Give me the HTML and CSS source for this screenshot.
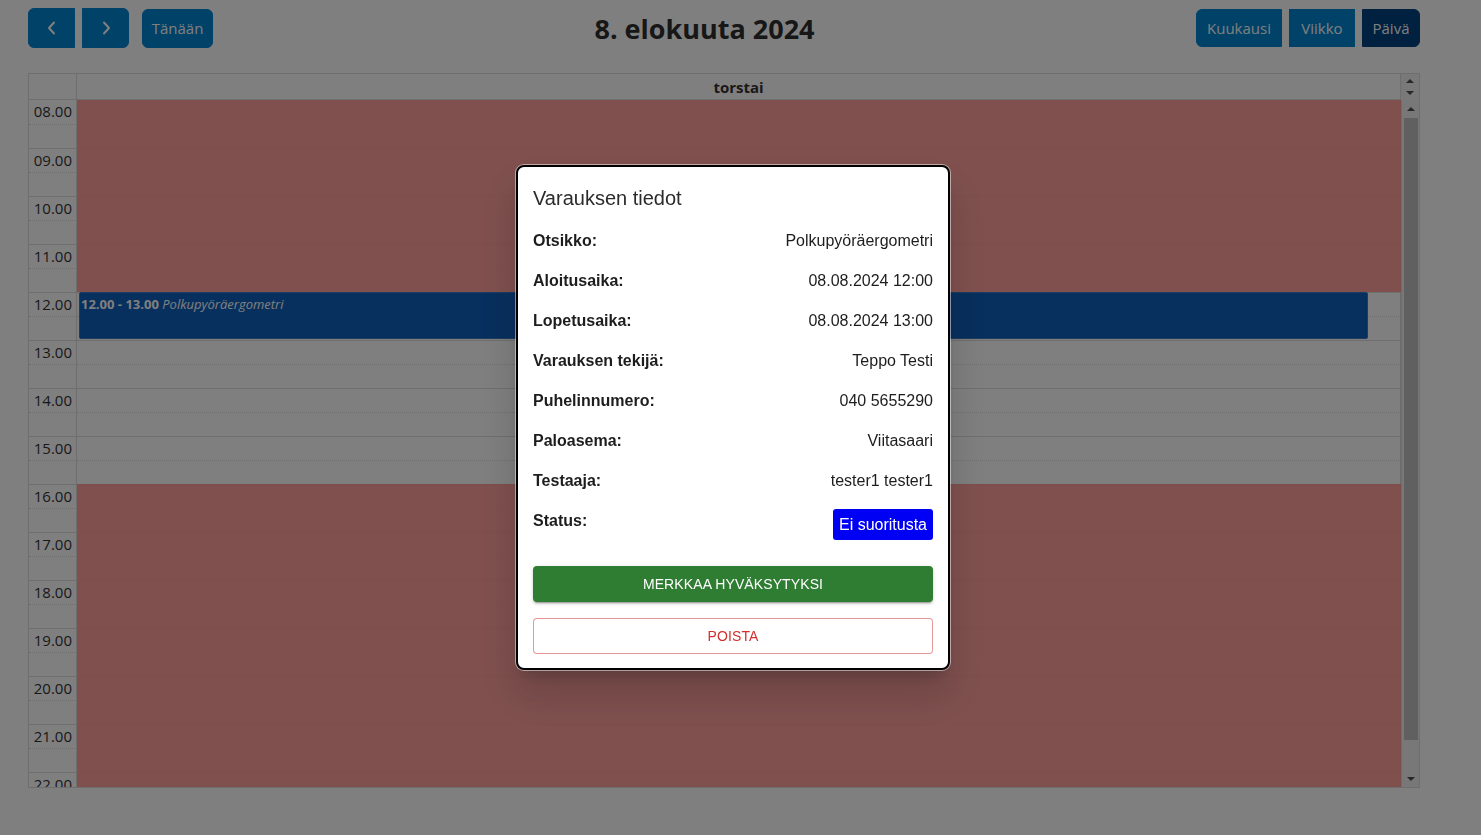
FILE: index.html
```html
<!DOCTYPE html>
<html lang="fi">
<head>
<meta charset="utf-8">
<title>Varaukset</title>
<link rel="stylesheet" href="styles.css">
</head>
<body>
<div class="page">
  <div class="toolbar">
    <div class="chunk">
      <div class="btn-group">
        <button class="btn btn-icon btn-first" aria-label="edellinen">
          <svg width="12" height="14" viewBox="0 0 12 14"><path d="M8 1.5 L3 7 L8 12.5" fill="none" stroke="#fff" stroke-width="2" stroke-linecap="round" stroke-linejoin="round"/></svg>
        </button>
        <button class="btn btn-icon btn-last" aria-label="seuraava">
          <svg width="12" height="14" viewBox="0 0 12 14"><path d="M4 1.5 L9 7 L4 12.5" fill="none" stroke="#fff" stroke-width="2" stroke-linecap="round" stroke-linejoin="round"/></svg>
        </button>
      </div>
      <button class="btn btn-today">Tänään</button>
    </div>
    <h2 class="title">8. elokuuta 2024</h2>
    <div class="chunk">
      <div class="btn-group">
        <button class="btn btn-view btn-first">Kuukausi</button>
        <button class="btn btn-view btn-mid">Viikko</button>
        <button class="btn btn-view btn-last btn-active">Päivä</button>
      </div>
    </div>
  </div>

  <div class="cal">
    <div class="cal-head">
      <div class="head-axis"></div>
      <div class="head-day">torstai</div>
      <div class="head-sb">
        <span class="arr arr-up"></span>
        <span class="arr arr-down"></span>
      </div>
    </div>
    <div class="cal-body">
      <div class="scroller">
        <div class="slots">
          <div class="slot hour"><div class="lbl">08.00</div><div class="lane"></div></div>
          <div class="slot half"><div class="lbl"></div><div class="lane"></div></div>
          <div class="slot hour"><div class="lbl">09.00</div><div class="lane"></div></div>
          <div class="slot half"><div class="lbl"></div><div class="lane"></div></div>
          <div class="slot hour"><div class="lbl">10.00</div><div class="lane"></div></div>
          <div class="slot half"><div class="lbl"></div><div class="lane"></div></div>
          <div class="slot hour"><div class="lbl">11.00</div><div class="lane"></div></div>
          <div class="slot half"><div class="lbl"></div><div class="lane"></div></div>
          <div class="slot hour"><div class="lbl">12.00</div><div class="lane"></div></div>
          <div class="slot half"><div class="lbl"></div><div class="lane"></div></div>
          <div class="slot hour"><div class="lbl">13.00</div><div class="lane"></div></div>
          <div class="slot half"><div class="lbl"></div><div class="lane"></div></div>
          <div class="slot hour"><div class="lbl">14.00</div><div class="lane"></div></div>
          <div class="slot half"><div class="lbl"></div><div class="lane"></div></div>
          <div class="slot hour"><div class="lbl">15.00</div><div class="lane"></div></div>
          <div class="slot half"><div class="lbl"></div><div class="lane"></div></div>
          <div class="slot hour"><div class="lbl">16.00</div><div class="lane"></div></div>
          <div class="slot half"><div class="lbl"></div><div class="lane"></div></div>
          <div class="slot hour"><div class="lbl">17.00</div><div class="lane"></div></div>
          <div class="slot half"><div class="lbl"></div><div class="lane"></div></div>
          <div class="slot hour"><div class="lbl">18.00</div><div class="lane"></div></div>
          <div class="slot half"><div class="lbl"></div><div class="lane"></div></div>
          <div class="slot hour"><div class="lbl">19.00</div><div class="lane"></div></div>
          <div class="slot half"><div class="lbl"></div><div class="lane"></div></div>
          <div class="slot hour"><div class="lbl">20.00</div><div class="lane"></div></div>
          <div class="slot half"><div class="lbl"></div><div class="lane"></div></div>
          <div class="slot hour"><div class="lbl">21.00</div><div class="lane"></div></div>
          <div class="slot half"><div class="lbl"></div><div class="lane"></div></div>
          <div class="slot hour"><div class="lbl">22.00</div><div class="lane"></div></div>
          <div class="slot half"><div class="lbl"></div><div class="lane"></div></div>

          <div class="day-layer">
            <div class="bg-event" style="top:0px;height:192px"></div>
            <div class="bg-event" style="top:384px;height:336px"></div>
            <div class="event" style="top:192px;height:47px">
              <b>12.00 - 13.00</b> <i>Polkupyöräergometri</i>
            </div>
          </div>
        </div>
      </div>
      <div class="scrollbar">
        <div class="sb-btn"><span class="arr arr-up"></span></div>
        <div class="sb-track"><div class="sb-thumb"></div></div>
        <div class="sb-btn"><span class="arr arr-down"></span></div>
      </div>
    </div>
  </div>
</div>

<div class="backdrop">
  <div class="modal">
    <h3 class="modal-title">Varauksen tiedot</h3>
    <div class="row"><span class="k">Otsikko:</span><span class="v">Polkupyöräergometri</span></div>
    <div class="row"><span class="k">Aloitusaika:</span><span class="v">08.08.2024 12:00</span></div>
    <div class="row"><span class="k">Lopetusaika:</span><span class="v">08.08.2024 13:00</span></div>
    <div class="row"><span class="k">Varauksen tekijä:</span><span class="v">Teppo Testi</span></div>
    <div class="row"><span class="k">Puhelinnumero:</span><span class="v">040 5655290</span></div>
    <div class="row"><span class="k">Paloasema:</span><span class="v">Viitasaari</span></div>
    <div class="row"><span class="k">Testaaja:</span><span class="v">tester1 tester1</span></div>
    <div class="row row-status"><span class="k">Status:</span><span class="badge">Ei suoritusta</span></div>
    <button class="mbtn mbtn-ok">MERKKAA HYVÄKSYTYKSI</button>
    <button class="mbtn mbtn-del">POISTA</button>
  </div>
</div>
</body>
</html>
```

FILE: styles.css
```css
* { box-sizing: border-box; }
html, body { margin: 0; padding: 0; background: #fff; }
body { font-family: "Open Sans", "Noto Sans", sans-serif; color: #333; }

.page { width: 1420px; padding: 8px 0 0 28px; }

.toolbar {
  display: flex;
  justify-content: space-between;
  align-items: center;
  height: 40px;
  margin-bottom: 25px;
}
.chunk { display: flex; align-items: center; gap: 13px; }
.btn-group { display: flex; gap: 7px; }
.btn {
  font-family: "Open Sans", "Noto Sans", sans-serif;
  font-size: 15px;
  line-height: 24px;
  color: #fff;
  background: #0084d0;
  border: 1px solid #0084d0;
  border-radius: 6px;
  padding: 7px 10px;
  height: 40px;
  display: flex;
  align-items: center;
  justify-content: center;
  white-space: nowrap;
}
.btn-group .btn-first { border-top-right-radius: 0; border-bottom-right-radius: 0; }
.btn-group .btn-last { border-top-left-radius: 0; border-bottom-left-radius: 0; }
.btn-group .btn-mid { border-radius: 0; }
.btn-icon { width: 47px; padding: 0; }
.btn-today { height: 39px; padding: 7px 10px; width: 71px; }
.btn-view { height: 38px; }
.btn-view.btn-first { width: 86px; }
.btn-view.btn-mid { width: 66px; }
.btn-view.btn-last { width: 58px; }
.btn-active { background: #00427e; border-color: #00427e; }

.title {
  margin: 0;
  font-size: 27px;
  font-weight: 700;
  color: #2e2e2e;
  line-height: 40px;
  position: relative;
  top: 1px;
}

.cal {
  width: 1392px;
  border: 1px solid #ddd;
}
.cal-head {
  display: grid;
  grid-template-columns: 48px 1fr 18px;
  height: 26px;
  border-bottom: 1px solid #ddd;
}
.head-axis { border-right: 1px solid #ddd; }
.head-day {
  text-align: center;
  font-weight: 700;
  font-size: 15px;
  line-height: 25px;
  padding-top: 1px;
  border-right: 1px solid #ddd;
}
.head-sb {
  background: #f3f3f3;
  display: flex;
  flex-direction: column;
  align-items: center;
  justify-content: center;
  gap: 8px;
}

.arr { display: block; width: 0; height: 0; border-left: 4px solid transparent; border-right: 4px solid transparent; }
.arr-up { border-bottom: 4px solid #505050; }
.arr-down { border-top: 4px solid #505050; }

.cal-body { display: flex; height: 687px; }
.scroller { flex: 1; overflow: hidden; }
.slots { position: relative; }
.slot {
  display: grid;
  grid-template-columns: 48px 1fr;
  height: 24px;
}
.slot.half .lbl,
.slot.half .lane { border-top: 1px dotted #ddd; }
.slot.half + .slot.hour .lbl,
.slot.half + .slot.hour .lane { border-top: 1px solid #ddd; }
.lbl {
  border-right: 1px solid #ddd;
  font-size: 15px;
  line-height: 23px;
  text-align: right;
  padding-right: 4px;
  color: #333;
  white-space: nowrap;
}
.lane { border-right: 1px solid #ddd; }

.day-layer {
  position: absolute;
  top: 0;
  left: 48px;
  right: 0;
  bottom: 0;
}
.bg-event {
  position: absolute;
  left: 0;
  right: 0;
  background: rgba(255, 148, 144, 0.88);
}
.event {
  position: absolute;
  left: 2px;
  right: 33px;
  background: #1060bc;
  border: 1px solid #3a78c0;
  border-radius: 2px;
  color: #fff;
  font-size: 13px;
  line-height: 18px;
  padding: 2px 2px 0 1px;
  white-space: nowrap;
  overflow: hidden;
}
.event b { font-weight: 700; }

.scrollbar {
  width: 18px;
  border-left: 1px solid #ddd;
  background: #f1f1f1;
  display: flex;
  flex-direction: column;
}
.sb-btn { height: 17px; display: flex; align-items: center; justify-content: center; }
.sb-track { flex: 1; padding: 1px 1px 0 2px; }
.sb-thumb { height: 622px; background: #c1c1c1; }

.backdrop {
  position: fixed;
  inset: 0;
  background: rgba(0, 0, 0, 0.5);
  display: flex;
  align-items: center;
  justify-content: center;
  padding-right: 15px;
}
.modal {
  width: 434px;
  background: #fff;
  border: 2px solid #000;
  border-radius: 8px;
  box-shadow: 0 0 0 1px rgba(255,255,255,0.5), 0 11px 15px -7px rgba(0,0,0,0.2), 0 24px 38px 3px rgba(0,0,0,0.14);
  padding: 15px 15px 14px 15px;
  font-family: "Liberation Sans", Arial, sans-serif;
  color: #1d1d1d;
  display: flex;
  flex-direction: column;
}
.modal-title {
  margin: 0 0 15px 0;
  font-size: 20px;
  font-weight: 400;
  line-height: 32px;
  color: #2b2b2b;
}
.row {
  display: flex;
  justify-content: space-between;
  align-items: flex-start;
  font-size: 16px;
  line-height: 24px;
  margin-bottom: 16px;
}
.k { font-weight: 700; }
.v { font-weight: 400; }
.row-status { margin-bottom: 25px; height: 32px; }
.badge {
  background: #0000f5;
  color: #fff;
  border-radius: 3px;
  padding: 4px 6px;
  line-height: 23px;
  font-size: 16px;
}
.mbtn {
  font-family: "Liberation Sans", Arial, sans-serif;
  width: 100%;
  height: 36px;
  border-radius: 4px;
  font-size: 14px;
  letter-spacing: 0.1px;
  cursor: pointer;
}
.mbtn-ok {
  background: #2e7d32;
  color: #fff;
  border: none;
  box-shadow: 0 3px 1px -2px rgba(0,0,0,0.2), 0 2px 2px 0 rgba(0,0,0,0.14), 0 1px 5px 0 rgba(0,0,0,0.12);
  margin-bottom: 16px;
}
.mbtn-del {
  background: #fff;
  color: #d32f2f;
  border: 1px solid rgba(211, 47, 47, 0.5);
}
```
